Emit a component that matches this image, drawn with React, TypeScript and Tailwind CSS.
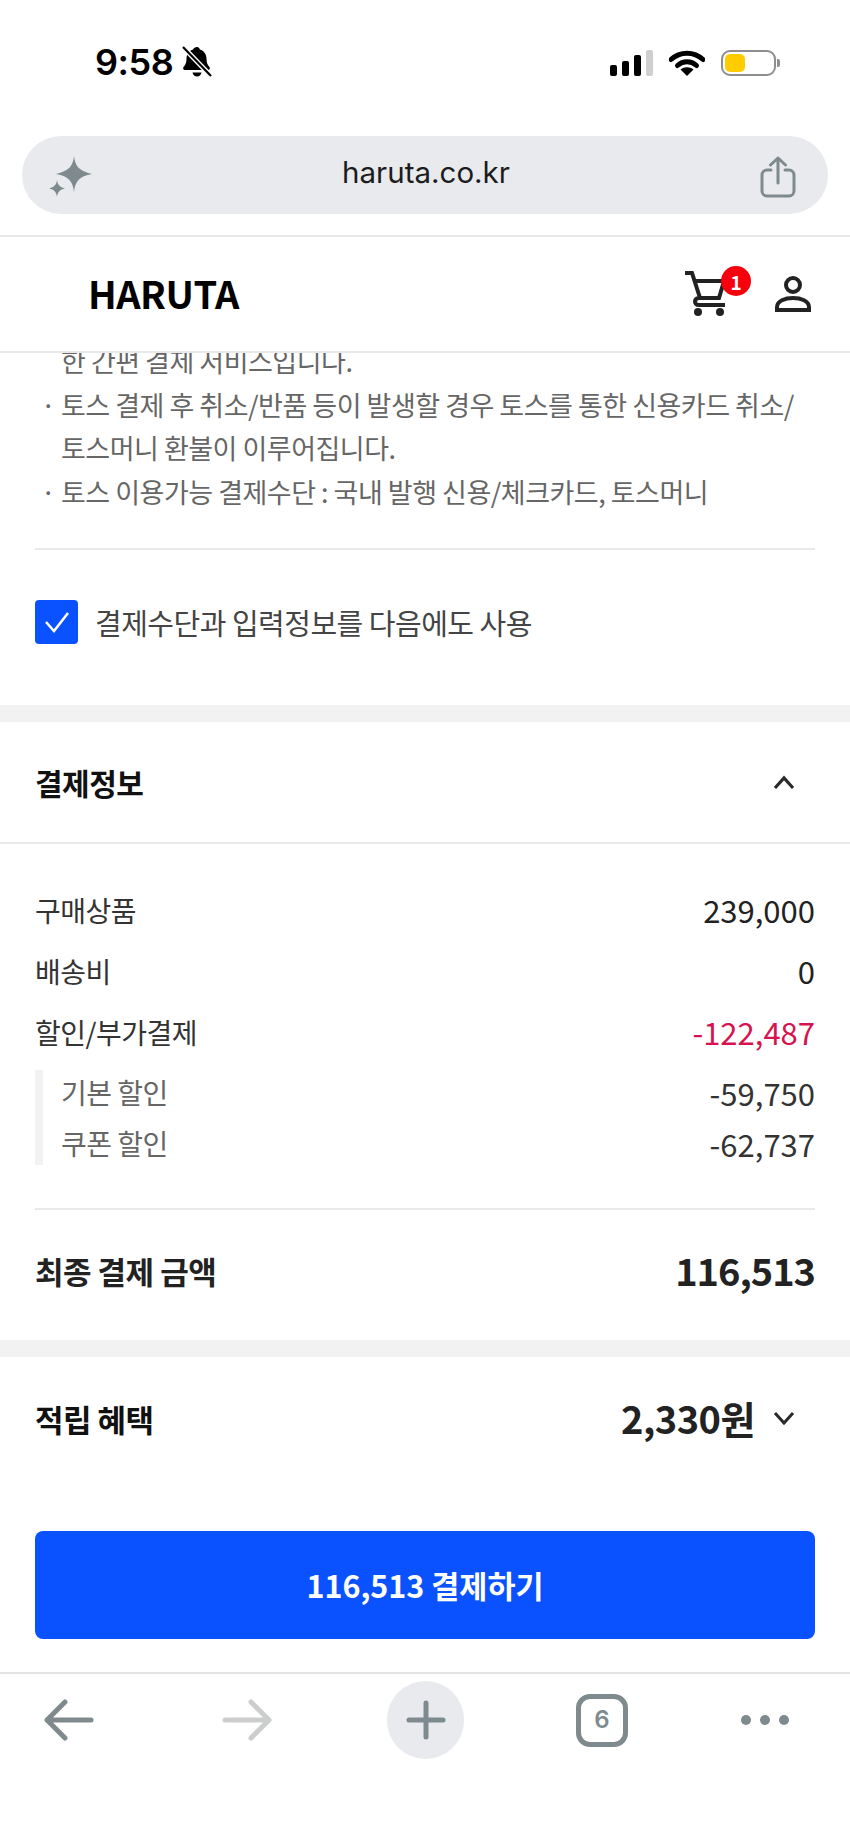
const FONT = "font-['Noto_Sans_CJK_KR','Noto_Sans',sans-serif]";

function StatusBar() {
  return (
    <div className="flex h-[136px] items-start justify-between pl-[95px] pr-[70px] pt-[44px]">
      <div className="flex items-center gap-[9px]">
        <span className="font-['Inter',sans-serif] text-[36px] font-semibold leading-[36px] tracking-[-0.5px] text-black">9:58</span>
        <svg width="30" height="32" viewBox="0 0 30 32" className="text-black">
          <path d="M15 1c1.6 0 2.6 1 2.8 2.4 4.300 1.200 6.700 4.800 6.700 9.600 0 3.800 1.200 6 3 8 .8 1 .3 3-1.500 3H3c-1.800 0-2.300-2-1.500-3 1.800-2 3-4.200 3-8 0-4.800 2.400-8.400 6.700-9.600C11.400 2 13.400 1 15 1z" fill="currentColor" />
          <path d="M10.500 26.500h9c-.5 2.500-2.300 4-4.500 4s-4-1.500-4.500-4z" fill="currentColor" />
          <path d="M1 1l28 29" stroke="#fff" strokeWidth="5" />
          <path d="M1 1l28 29" stroke="currentColor" strokeWidth="2.200" />
        </svg>
      </div>
      <div className="flex items-center gap-[16px] pt-[6px]">
        <div className="flex items-end gap-[5px]">
          <span className="h-[11px] w-[7px] rounded-[2px] bg-black" />
          <span className="h-[15px] w-[7px] rounded-[2px] bg-black" />
          <span className="h-[21px] w-[7px] rounded-[2px] bg-black" />
          <span className="h-[26px] w-[7px] rounded-[2px] bg-[#cfcfcf]" />
        </div>
        <svg width="36" height="26" viewBox="0 0 36 26">
          <path d="M2 9.500C11 1 25 1 34 9.500" fill="none" stroke="#000" strokeWidth="5" strokeLinecap="round" />
          <path d="M8.500 15.500c5.500-5 13.500-5 19 0" fill="none" stroke="#000" strokeWidth="5" strokeLinecap="round" />
          <path d="M18 26l-6.500-6.500c3.800-3 9.200-3 13 0z" fill="#000" />
        </svg>
        <div className="flex items-center gap-[1px]">
          <div className="flex h-[26px] w-[55px] items-center rounded-[9px] border-[2.500px] border-[#8e8e8e] p-[2px]">
            <span className="h-[18px] w-[20px] rounded-[5px] bg-[#ffcc00]" />
          </div>
          <span className="h-[8px] w-[3px] rounded-r-[2px] bg-[#8e8e8e]" />
        </div>
      </div>
    </div>
  );
}

function AddressBar() {
  return (
    <div className="relative mx-[22px] flex h-[78px] items-center justify-between rounded-[39px] bg-[#e8eaed] pl-[26px] pr-[32px]">
      <svg width="44" height="44" viewBox="0 0 44 44" className="mt-[6px]">
        <path d="M26 0c1 10 5 15 18 18-13 2-17 8-18 18-1-10-5-16-18-18 13-3 17-8 18-18z" fill="#7e8a8e" />
        <path d="M9 24c.5 5 3 7 8 8.500-5 1-7.500 3.500-8 8.500-.5-5-3-7.500-8-8.500 5-1.500 7.500-3.500 8-8.500z" fill="#7e8a8e" />
      </svg>
      <span className="mb-[4px] font-['Inter',sans-serif] text-[29.500px] leading-none text-[#1c1c1e]">haruta.co.kr</span>
      <svg width="36" height="42" viewBox="0 0 36 42" fill="none" stroke="#7f8a8e" strokeWidth="3" strokeLinecap="round" strokeLinejoin="round" className="mt-[4px]">
        <path d="M11 14H7a5 5 0 0 0-5 5v16a5 5 0 0 0 5 5h22a5 5 0 0 0 5-5V19a5 5 0 0 0-5-5h-4" />
        <path d="M18 27V2M10.500 9L18 2l7.500 7" />
      </svg>
    </div>
  );
}

function SiteHeader() {
  return (
    <div className="mt-[21px] flex h-[118px] items-center justify-between border-y-2 border-[#e9e9e9] pl-[88px] pr-[39px]">
      <span className="mb-[2px] text-[38px] font-bold leading-none tracking-[-0.5px] text-black">HARUTA</span>
      <div className="flex items-center gap-[34px]">
        <div className="relative mr-[14px]">
          <svg width="42" height="46" viewBox="0 0 42 46" fill="none" stroke="#222" strokeWidth="4" className="block">
            <path d="M0 2h7l8 25h-1c-3 0-4 2-4 3.500S11 34 14 34h26" />
            <path d="M9 10h30l-5 17H15" />
            <circle cx="13" cy="41" r="4" fill="#222" stroke="none" />
            <circle cx="35" cy="41" r="4" fill="#222" stroke="none" />
          </svg>
          <span className="absolute -right-[24px] -top-[5px] flex h-[30px] w-[30px] items-center justify-center rounded-full bg-[#f5000c] text-[19px] font-bold leading-none text-white">1</span>
        </div>
        <svg width="36" height="36" viewBox="0 0 36 36" fill="none" stroke="#222" strokeWidth="4">
          <circle cx="18" cy="9" r="7" />
          <path d="M2 34v-3c0-6 8-9 16-9s16 3 16 9v3z" />
        </svg>
      </div>
    </div>
  );
}

function Note({ lines }: { lines: string[] }) {
  return (
    <div className="flex">
      <span className="w-[26px] shrink-0 text-center">·</span>
      <div>
        {lines.map((l) => (
          <div key={l}>{l}</div>
        ))}
      </div>
    </div>
  );
}

function Row({ label, value, valueClass = "text-[#222]" }: { label: string; value: string; valueClass?: string }) {
  return (
    <div className="flex h-[61px] items-center justify-between text-[28px] leading-none tracking-[-0.5px] text-[#333]">
      <span>{label}</span>
      <span className={`text-[31px] tracking-normal ${valueClass}`}>{value}</span>
    </div>
  );
}

function BottomNav() {
  return (
    <div className="flex h-[169px] items-start justify-between border-t-2 border-[#e4e4e4] pl-[44px] pr-[61px] pt-[7px]">
      <div className="flex h-[78px] w-[50px] items-center">
        <svg width="50" height="42" viewBox="0 0 50 42" fill="none" stroke="#7f8a8e" strokeWidth="5" strokeLinecap="round" strokeLinejoin="round">
          <path d="M47 21H4M21 3L3 21l18 18" />
        </svg>
      </div>
      <div className="ml-[128px] mr-[0px] flex h-[78px] w-[50px] items-center">
        <svg width="50" height="42" viewBox="0 0 50 42" fill="none" stroke="#cccdcd" strokeWidth="5" strokeLinecap="round" strokeLinejoin="round">
          <path d="M3 21h43M29 3l18 18-18 18" />
        </svg>
      </div>
      <div className="ml-[115px] flex h-[78px] w-[78px] items-center justify-center rounded-full bg-[#e8eaed]">
        <svg width="40" height="40" viewBox="0 0 40 40" stroke="#7f8a8e" strokeWidth="5" strokeLinecap="round">
          <path d="M20 3v34M3 20h34" />
        </svg>
      </div>
      <div className="ml-[112px] flex h-[78px] items-center">
        <div className="flex h-[53px] w-[52px] items-center justify-center rounded-[14px] border-[5px] border-[#7f8a8e] font-['Inter',sans-serif] text-[24px] font-semibold leading-none text-[#7f8a8e]">6</div>
      </div>
      <div className="ml-[113px] flex h-[78px] items-center gap-[9px]">
        <span className="h-[10px] w-[10px] rounded-full bg-[#7f8a8e]" />
        <span className="h-[10px] w-[10px] rounded-full bg-[#7f8a8e]" />
        <span className="h-[10px] w-[10px] rounded-full bg-[#7f8a8e]" />
      </div>
    </div>
  );
}

export default function App() {
  return (
    <div className={`${FONT} h-[1842px] w-[850px] overflow-hidden bg-white`}>
      <StatusBar />
      <AddressBar />
      <SiteHeader />

      <div className="h-[352px] overflow-hidden">
        <div className="-mt-[14px] px-[35px]">
          <div className="border-b-2 border-[#e9e9e9] pb-[35px] text-[27px] leading-[43.500px] tracking-[-0.5px] text-[#666]">
            <div className="pl-[26px]">한 간편 결제 서비스입니다.</div>
            <Note lines={["토스 결제 후 취소/반품 등이 발생할 경우 토스를 통한 신용카드 취소/", "토스머니 환불이 이루어집니다."]} />
            <Note lines={["토스 이용가능 결제수단 : 국내 발행 신용/체크카드, 토스머니"]} />
          </div>
          <div className="mt-[50px] flex items-center gap-[17px]">
            <div className="flex h-[44px] w-[43px] items-center justify-center rounded-[4px] bg-[#0a52ff]">
              <svg width="26" height="22" viewBox="0 0 26 22" fill="none" stroke="#fff" strokeWidth="2.500">
                <path d="M2 11l8 9L24 2" />
              </svg>
            </div>
            <span className="text-[29px] leading-none tracking-[-0.5px] text-[#444]">결제수단과 입력정보를 다음에도 사용</span>
          </div>
        </div>
      </div>

      <div className="h-[17px] bg-[#f2f2f2]" />

      <div className="flex h-[122px] items-center justify-between border-b-2 border-[#e9e9e9] pl-[35px] pr-[55px]">
        <span className="text-[30px] font-bold leading-none tracking-[-0.5px] text-[#111]">결제정보</span>
        <svg width="22" height="15" viewBox="0 0 22 15" fill="none" stroke="#2a2a2a" strokeWidth="3.200">
          <path d="M2 13l9-10 9 10" />
        </svg>
      </div>

      <div className="px-[35px] pt-[35px]">
        <Row label="구매상품" value="239,000" />
        <Row label="배송비" value="0" />
        <Row label="할인/부가결제" value="-122,487" valueClass="text-[#d6134f]" />
        <div className="mt-[8px] flex h-[95px] flex-col gap-[23px] border-l-[8px] border-[#f2f2f2] pl-[18px] pt-[8px] text-[28px] leading-none tracking-[-0.5px] text-[#666]">
          <div className="flex h-[28px] items-center justify-between">
            <span>기본 할인</span>
            <span className="text-[31px] tracking-normal text-[#333]">-59,750</span>
          </div>
          <div className="flex h-[28px] items-center justify-between">
            <span>쿠폰 할인</span>
            <span className="text-[31px] tracking-normal text-[#333]">-62,737</span>
          </div>
        </div>
        <div className="mt-[43px] flex h-[132px] items-center justify-between border-t-2 border-[#e9e9e9] pb-[10px]">
          <span className="text-[31px] font-bold leading-none tracking-[-0.5px] text-[#222]">최종 결제 금액</span>
          <span className="text-[38px] font-bold leading-none tracking-[-1px] text-[#222]">116,513</span>
        </div>
      </div>

      <div className="h-[17px] bg-[#f2f2f2]" />

      <div className="flex h-[122px] items-center justify-between pl-[35px] pr-[55px]">
        <span className="text-[31px] font-bold leading-none tracking-[-0.5px] text-[#111]">적립 혜택</span>
        <div className="flex items-center gap-[18px]">
          <span className="text-[38px] font-bold leading-none tracking-[-0.5px] text-[#222]">2,330원</span>
          <svg width="22" height="14" viewBox="0 0 22 14" fill="none" stroke="#2a2a2a" strokeWidth="3">
            <path d="M2 2l9 10 9-10" />
          </svg>
        </div>
      </div>

      <div className="mt-[52px] px-[35px]">
        <button className="flex h-[108px] w-full items-center justify-center rounded-[8px] bg-[#0a52ff] text-[30.500px] font-bold leading-none text-white">116,513 결제하기</button>
      </div>

      <div className="mt-[33px]">
        <BottomNav />
      </div>
    </div>
  );
}
